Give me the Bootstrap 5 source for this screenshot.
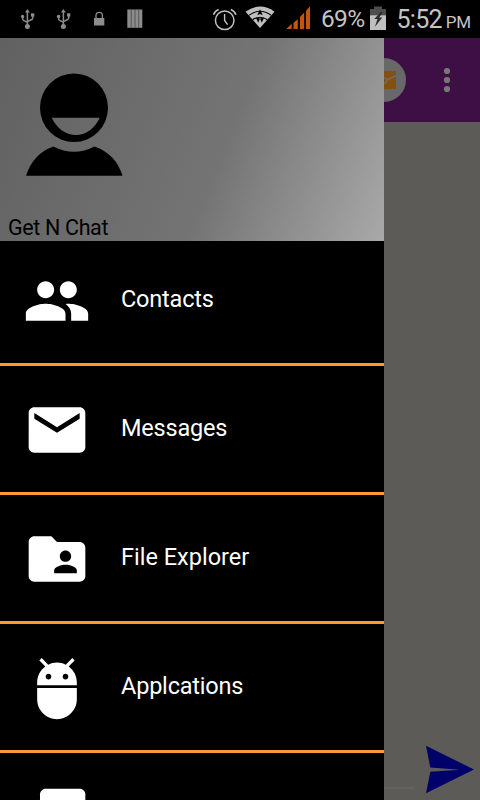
<!DOCTYPE html>
<html lang="en">
<head>
<meta charset="utf-8">
<meta name="viewport" content="width=device-width, initial-scale=1">
<title>Get N Chat</title>
<link href="https://cdn.jsdelivr.net/npm/bootstrap@5.3.0/dist/css/bootstrap.min.css" rel="stylesheet">
<style>
body{font-family:Roboto,"Noto Sans",sans-serif;background:#5d5b58;line-height:1}
svg{display:block;flex:none}
.screen{width:480px;height:800px}
.statusbar{height:38px;background:#000;color:#c4c4c4}
.status-icons{padding-left:20px}
.pct{font-size:24.5px;margin-left:9px;letter-spacing:-.7px}
.clock{font-size:25px;margin-left:9px;letter-spacing:-.7px}
.clock small{font-size:17px;margin-left:4px;letter-spacing:-.2px}
.drawer{width:384px;background:#000}
.profile{height:203px;background:linear-gradient(112deg,#616161 0%,#747474 58%,#a9a9a9 100%);color:#000}
.avatar{margin:35px 0 0 25px}
.profile-name{font-size:21.5px;padding:0 0 3px 8px;letter-spacing:-.35px}
.list-group .entry.list-group-item{height:129px;padding:30px 0 0 23px;border:0;border-bottom:3px solid #ff9734;background:#000;color:#fff;border-radius:0}
.list-group .entry.list-group-item:first-child{height:125px;padding-top:26px}
.list-group .entry + .entry{margin-top:0}
.entry span{font-size:23.5px;margin-left:30px;height:64px;line-height:64px;letter-spacing:-.2px}
.entry .wide-label{letter-spacing:0}
.toolbar{height:84px;background:#3e0f45}
.compose{height:76px}
.field-line{width:30px;height:2px;background:#656361;margin-bottom:11px}
</style>
</head>
<body>
<div class="screen d-flex flex-column overflow-hidden">
  <header class="statusbar d-flex align-items-center flex-shrink-0">
    <div class="status-icons d-flex">
      <svg width="134" height="38" viewBox="20 0 134 38" fill="#8c8c8c">
        <g id="usb"><path d="M27.400 9l2.400 3.500H25z"/><circle cx="27.400" cy="26.500" r="2.500"/><circle cx="22.600" cy="16.500" r="1.700"/><path d="M31 13.300h3.300v3.300H31z"/><path d="M27.400 11v14M22.600 16v2.800q0 1 1 1.500l3.800 2M32.700 16v2q0 1-1 1.500l-4.300 2.200" fill="none" stroke="#8c8c8c" stroke-width="1.500"/></g>
        <use href="#usb" x="36"/>
        <path d="M94 18h10.300v7.500H94z"/><path d="M96 18v-2.400a3.200 3.200 0 0 1 6.400 0V18" fill="none" stroke="#8c8c8c" stroke-width="1.300"/>
        <path d="M127.300 9.500h15v18.300h-15z"/><path d="M131.200 9.500v18.300M135 9.500v18.300M138.700 9.500v18.300" stroke="#555" stroke-width="1"/>
      </svg>
    </div>
    <svg width="158" height="38" viewBox="154 0 158 38" fill="none" stroke="#c0c0c0">
      <circle cx="224.700" cy="20.300" r="9.300" stroke-width="1.500"/>
      <path d="M224.600 14v6.500l3 4.200" stroke-width="1.400"/><path d="M213.500 14.700q1.400-3.800 5.100-5.200M230.800 9.500q3.700 1.400 5.100 5.200" stroke-width="1.600"/>
      <path d="M245.500 11.700Q260 1.500 274.500 11.700L260 28z" fill="#c0c0c0" stroke="none"/>
      <path d="M248.800 15.400Q260 7.200 271.200 15.400M252.600 19.800Q260 14.600 267.400 19.800" stroke="#000" stroke-width="1.100"/>
      <path d="M260 9.300l2.800 6-2.800-1.200-2.800 1.200zM255.800 17.500l2.600 5.500 1.600-2.500 1.600 2.500 2.600-5.500-4.200 1z" fill="#000" stroke="none"/><path d="M260 18.500l2 5-2 4-2-4z" fill="#c0c0c0" stroke="none"/>
      <g fill="#c4550c" stroke="none"><path d="M286.300 29l5.400-5.200V29zM293.500 22.800l4.300-3.600V29h-4.300zM300 17l4.200-4.600V29H300zM306 10.800l4-4.500V29h-4z"/></g>
    </svg>
    <span class="pct">69%</span>
    <svg class="ms-auto" width="18" height="38" viewBox="370 0 18 38"><path d="M371 9h4V6.500h8V9h4v6.300h-16z" fill="#4d4d4d"/><path d="M371 15.200h16V30h-16z" fill="#bfbfbf"/><path d="M381.800 12l-6.500 7h3.200l-2.700 8 7.400-9.500h-3.100l3.800-5.500z" fill="#292929"/></svg>
    <span class="clock text-nowrap" style="margin-right:9px">5:52<small>PM</small></span>
  </header>
  <main class="d-flex flex-grow-1 overflow-hidden">
    <nav class="drawer flex-shrink-0 overflow-hidden">
      <div class="profile d-flex flex-column justify-content-between">
        <svg class="avatar" width="99" height="105" viewBox="25 73 99 105"><path fill-rule="evenodd" d="M74 73.500a34 34.300 0 1 0 0 68.600a34 34.300 0 1 0 0-68.600zM51.700 117.800H99.700C95 128 86.500 135 76 135S56.500 128 51.700 117.800z"/><path d="M26 175.800Q33 153.500 53.500 146.400Q74 157 94.500 146.400Q116 154 122.500 175.800z"/></svg>
        <div class="profile-name">Get N Chat</div>
      </div>
      <div class="list-group rounded-0">
        <a class="entry list-group-item d-flex align-items-start"><svg width="68" height="68" viewBox="0 0 24 24" fill="#fff"><path d="M16 11c1.660 0 2.990-1.340 2.990-3S17.660 5 16 5s-3 1.340-3 3 1.340 3 3 3zm-8 0c1.660 0 2.990-1.340 2.990-3S9.660 5 8 5 5 6.340 5 8s1.340 3 3 3zm0 2c-2.330 0-7 1.170-7 3.500V19h14v-2.500C15 14.170 10.330 13 8 13zm8 0c-.29 0-.62.02-.97.05 1.160.84 1.970 1.970 1.970 3.450V19h6v-2.500c0-2.330-4.670-3.500-7-3.500z"/></svg><span>Contacts</span></a>
        <a class="entry list-group-item d-flex align-items-start"><svg width="68" height="68" viewBox="0 0 24 24" fill="#fff"><path d="M20 4H4c-1.100 0-1.990.9-1.990 2L2 18c0 1.100.9 2 2 2h16c1.100 0 2-.9 2-2V6c0-1.100-.9-2-2-2zm0 4l-8 5-8-5V6l8 5 8-5v2z"/></svg><span>Messages</span></a>
        <a class="entry list-group-item d-flex align-items-start"><svg width="68" height="68" viewBox="0 0 24 24" fill="#fff"><path d="M20 6h-8l-2-2H4c-1.100 0-1.990.9-1.990 2L2 18c0 1.100.9 2 2 2h16c1.100 0 2-.9 2-2V8c0-1.100-.9-2-2-2zm-5 3c1.100 0 2 .9 2 2s-.9 2-2 2-2-.9-2-2 .9-2 2-2zm4 8h-8v-1c0-1.330 2.670-2 4-2s4 .67 4 2v1z"/></svg><span class="wide-label">File Explorer</span></a>
        <a class="entry list-group-item d-flex align-items-start"><svg width="68" height="68" viewBox="0 0 24 24" fill="#fff"><path d="M5 16c0 3.870 3.130 7 7 7s7-3.130 7-7v-4H5v4zM16.120 4.370l2.100-2.100-.82-.83-2.300 2.310C14.160 3.280 13.120 3 12 3s-2.140.28-3.090.75L6.600 1.440l-.82.83 2.100 2.100C6.140 5.640 5 7.680 5 10v1h14v-1c0-2.320-1.140-4.360-2.880-5.630zM9 9c-.55 0-1-.45-1-1s.45-1 1-1 1 .45 1 1-.45 1-1 1zm6 0c-.55 0-1-.45-1-1s.45-1 1-1 1 .45 1 1-.45 1-1 1z"/></svg><span>Applcations</span></a>
        <a class="entry list-group-item d-flex align-items-start"><svg width="68" height="68" viewBox="0 0 24 24" fill="#fff"><path d="M22 16V4c0-1.100-.9-2-2-2H8c-1.100 0-2 .9-2 2v12c0 1.100.9 2 2 2h12c1.100 0 2-.9 2-2z"/></svg></a>
      </div>
    </nav>
    <section class="flex-grow-1 d-flex flex-column justify-content-between">
      <div class="toolbar">
        <svg width="96" height="84" viewBox="384 38 96 84"><circle cx="384" cy="80" r="22" fill="#686868"/><path d="M370 71h26v18h-26z" fill="#84500f"/><path d="M370 75l15 6 11-5.500M385 80l-6 7" fill="none" stroke="#706b64" stroke-width="1.600"/><circle cx="384" cy="80.500" r="2.600" fill="#84500f" stroke="#706b64" stroke-width="1.300"/><g fill="#777"><circle cx="447" cy="71" r="3.100"/><circle cx="447" cy="80" r="3.100"/><circle cx="447" cy="89" r="3.100"/></g></svg>
      </div>
      <div class="compose d-flex align-items-end">
        <div class="field-line"></div>
        <svg width="66" height="76" viewBox="414 724 66 76"><path d="M426 745.800L474 769.500L426 793.200L430.300 771.800L460 769.700L430.300 767.500z" fill="#00006a"/></svg>
      </div>
    </section>
  </main>
</div>
<script src="https://cdn.jsdelivr.net/npm/bootstrap@5.3.0/dist/js/bootstrap.bundle.min.js"></script>
</body>
</html>
